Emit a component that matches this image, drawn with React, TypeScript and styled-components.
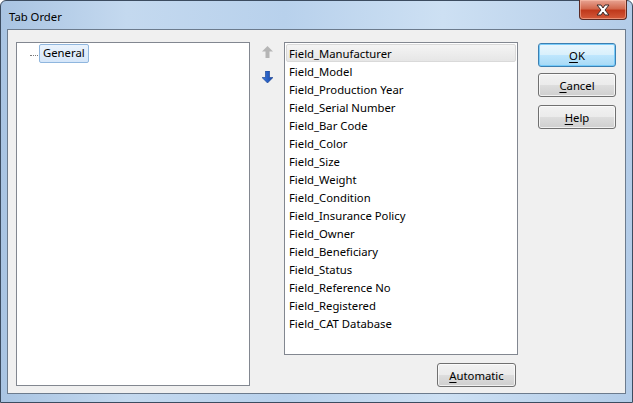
import React from 'react';
import { styled, createGlobalStyle } from 'styled-components';

const FIELDS = [
  'Field_Manufacturer',
  'Field_Model',
  'Field_Production Year',
  'Field_Serial Number',
  'Field_Bar Code',
  'Field_Color',
  'Field_Size',
  'Field_Weight',
  'Field_Condition',
  'Field_Insurance Policy',
  'Field_Owner',
  'Field_Beneficiary',
  'Field_Status',
  'Field_Reference No',
  'Field_Registered',
  'Field_CAT Database',
];

const GlobalStyle = createGlobalStyle`
  html, body {
    margin: 0;
    padding: 0;
    background: #ffffff;
  }
  body {
    font-family: 'Noto Sans', 'Open Sans', sans-serif;
    font-size: 11.3px;
    color: #000;
  }
`;

function App() {
  return (
    <>
      <GlobalStyle />
      <Window>
        <TitleBar>
          <Title>Tab Order</Title>
          <CloseButton>
            <svg width='16' height='12' viewBox='0 0 16 12'>
              <path
                d='M2 1 L6 1 L8 4 L10 1 L14 1 L10 6 L14 11 L10 11 L8 8 L6 11 L2 11 L6 6 Z'
                fill='#ffffff'
                stroke='#3a2a2a'
                strokeWidth='1'
                strokeLinejoin='round'
              />
            </svg>
          </CloseButton>
        </TitleBar>
        <Client>
          <TreeBox>
            <TreeItem>
              <TreeDots />
              <TreeLabel>General</TreeLabel>
            </TreeItem>
          </TreeBox>
          <Arrows>
            <ArrowIcon $up>
              <svg width='11' height='12' viewBox='0 0 11 12'>
                <path d='M5.5 0 L11 5.5 L7.5 5.5 L7.5 12 L3.5 12 L3.5 5.5 L0 5.5 Z' fill='#b5b5b5' />
              </svg>
            </ArrowIcon>
            <ArrowIcon>
              <svg width='11' height='12' viewBox='0 0 11 12'>
                <defs>
                  <linearGradient id='dn' x1='0' y1='0' x2='1' y2='0'>
                    <stop offset='0' stopColor='#3b7be0' />
                    <stop offset='1' stopColor='#1846a8' />
                  </linearGradient>
                </defs>
                <path
                  d='M3.5 0 L7.5 0 L7.5 6.5 L11 6.5 L5.5 12 L0 6.5 L3.5 6.5 Z'
                  fill='url(#dn)'
                  stroke='#143c8c'
                  strokeWidth='0.6'
                />
              </svg>
            </ArrowIcon>
          </Arrows>
          <ListColumn>
            <ListBox>
              {FIELDS.map((field, i) => (
                <ListRow key={field} $selected={i === 0}>
                  {field}
                </ListRow>
              ))}
            </ListBox>
            <Button $width={79}>
              <u>A</u>utomatic
            </Button>
          </ListColumn>
          <ButtonColumn>
            <Button $width={78} $default>
              <u>O</u>K
            </Button>
            <Button $width={78}>
              <u>C</u>ancel
            </Button>
            <Button $width={78} $gap={2}>
              <u>H</u>elp
            </Button>
          </ButtonColumn>
        </Client>
      </Window>
    </>
  );
}

export default App;

const Window = styled.div`
  width: 633px;
  height: 403px;
  box-sizing: border-box;
  border: 1px solid #3c4c60;
  border-radius: 6px 6px 0 0;
  background: linear-gradient(
    90deg,
    #a9c4e2 0%,
    #c4d9ef 20%,
    #b8d1ec 45%,
    #cde0f3 70%,
    #b3cce8 100%
  );
  display: flex;
  flex-direction: column;
  padding: 0 6px 8px 6px;
  position: relative;
`;

const TitleBar = styled.div`
  height: 28px;
  display: flex;
  align-items: flex-start;
  justify-content: space-between;
`;

const Title = styled.div`
  font-size: 11.3px;
  color: #000;
  padding: 8px 0 0 2px;
`;

const CloseButton = styled.div`
  width: 46px;
  height: 19px;
  margin-right: -1px;
  margin-top: -1px;
  border: 1px solid #5a2a24;
  border-top: none;
  border-radius: 0 0 4px 4px;
  background: linear-gradient(180deg, #e8a493 0%, #d2694e 45%, #c0391c 55%, #d45a3a 100%);
  display: flex;
  align-items: center;
  justify-content: center;
  box-shadow: inset 0 0 0 1px rgba(255, 200, 180, 0.5);
`;

const Client = styled.div`
  flex: 1;
  background: #f0f0f0;
  border: 1px solid #6c7b8d;
  display: flex;
  align-items: flex-start;
  padding: 12px 0 0 8px;
`;

const TreeBox = styled.div`
  width: 234px;
  height: 344px;
  box-sizing: border-box;
  border: 1px solid #828790;
  background: #fff;
  padding: 1px 0 0 13px;
`;

const TreeItem = styled.div`
  display: flex;
  align-items: center;
`;

const TreeDots = styled.div`
  width: 8px;
  border-top: 1px dotted #7a7a7a;
  margin-right: 1px;
  margin-top: 3px;
`;

const TreeLabel = styled.div`
  border: 1px solid #8fb6de;
  border-radius: 2px;
  background: linear-gradient(180deg, #eaf3fd 0%, #d5e6f9 100%);
  padding: 0 3px;
  height: 17px;
  line-height: 16px;
`;

const Arrows = styled.div`
  width: 34px;
  display: flex;
  flex-direction: column;
  align-items: center;
  padding-top: 4px;
`;

const ArrowIcon = styled.div<{ $up?: boolean }>`
  height: 12px;
  margin-bottom: ${({ $up }) => ($up ? '13px' : '0')};
  display: flex;
`;

const ListColumn = styled.div`
  display: flex;
  flex-direction: column;
  align-items: flex-end;
  gap: 8px;
`;

const ListBox = styled.div`
  width: 234px;
  height: 313px;
  box-sizing: border-box;
  border: 1px solid #828790;
  background: #fff;
  padding: 1px;
`;

const ListRow = styled.div<{ $selected?: boolean }>`
  height: 18px;
  line-height: 17px;
  padding-left: 2px;
  box-sizing: border-box;
  border: 1px solid ${({ $selected }) => ($selected ? '#d9d9d9' : 'transparent')};
  border-radius: 2px;
  background: ${({ $selected }) =>
    $selected ? 'linear-gradient(180deg, #f4f4f4 0%, #e6e6e6 100%)' : 'transparent'};
`;

const ButtonColumn = styled.div`
  display: flex;
  flex-direction: column;
  gap: 6px;
  padding: 1px 0 0 20px;
`;

const Button = styled.div<{ $width: number; $default?: boolean; $gap?: number }>`
  width: ${({ $width }) => $width}px;
  height: 24px;
  box-sizing: border-box;
  margin-top: ${({ $gap }) => ($gap ? `${$gap}px` : '0')};
  margin-right: 2px;
  border: 1px solid ${({ $default }) => ($default ? '#3c7fb1' : '#707070')};
  border-radius: 3px;
  background: ${({ $default }) =>
    $default
      ? 'linear-gradient(180deg, #eaf6fd 0%, #d9f0fc 48%, #bee6fd 52%, #a7d9f5 100%)'
      : 'linear-gradient(180deg, #f2f2f2 0%, #ebebeb 48%, #dddddd 52%, #cfcfcf 100%)'};
  box-shadow: inset 0 0 0 1px
    ${({ $default }) => ($default ? 'rgba(110, 200, 250, 0.9)' : 'rgba(255, 255, 255, 0.7)')};
  display: flex;
  align-items: center;
  justify-content: center;
  font-size: 11.3px;
  color: #000;

  & u {
    text-decoration-thickness: 1px;
    text-underline-offset: 2px;
  }
`;
